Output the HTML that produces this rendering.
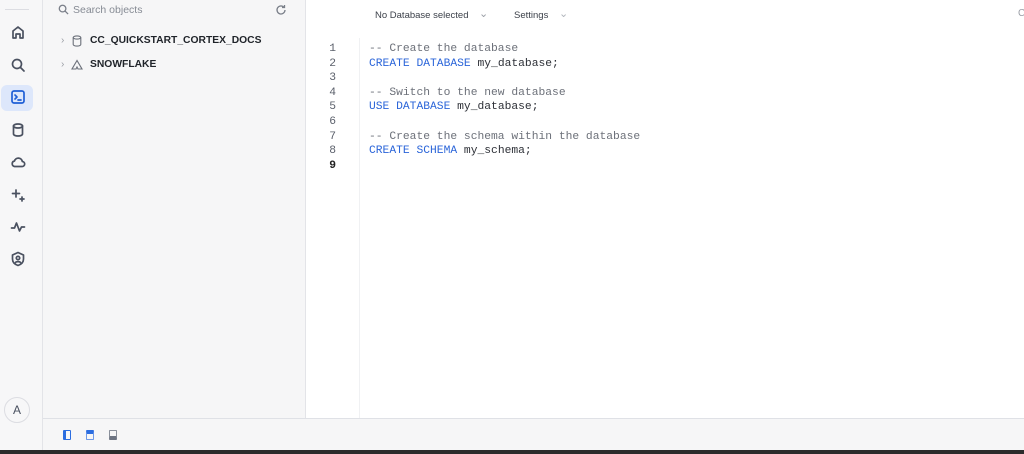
<!DOCTYPE html>
<html><head><meta charset="utf-8"><style>
*{margin:0;padding:0;box-sizing:border-box}
body{width:1024px;height:454px;overflow:hidden;background:#fff;font-family:"Liberation Sans",sans-serif;position:relative}
.rail{position:absolute;left:0;top:0;width:43px;height:450px;background:#f7f7f8;border-right:1px solid #e3e4e8}
.rail svg{position:absolute;left:10px;width:16px;height:16px;fill:none;stroke:#4a5160;stroke-width:1.7;stroke-linecap:round;stroke-linejoin:round}
.panel{position:absolute;left:43px;top:0;width:263px;height:418px;background:#f6f6f7;border-right:1px solid #e3e4e8}
.editor{position:absolute;left:306px;top:0;right:0;height:418px;background:#fff}
.bottom{position:absolute;left:43px;top:418px;right:0;height:32px;background:#f6f6f7;border-top:1px solid #dfe1e6}
.dark{position:absolute;left:0;top:450px;width:1024px;height:4px;background:#2b2b2b}
.t{position:absolute;font-size:11px;white-space:nowrap}
.code{position:absolute;left:369px;top:42px;font-family:"Liberation Mono",monospace;font-size:11.3px;line-height:14.6px;color:#2c2f36;white-space:pre}
.nums{position:absolute;left:316px;width:20px;top:42px;font-family:"Liberation Mono",monospace;font-size:11.3px;line-height:14.6px;color:#5a5f6a;text-align:right;white-space:pre}
.k{color:#2b65d9}.c{color:#6c7079}
</style></head><body>
<div class="rail">
<div style="position:absolute;left:5px;top:9px;width:24px;height:1px;background:#dcdde2"></div>
<svg style="top:24px" viewBox="0 0 16 16"><path d="M3 14V7l5-4 5 4v7h-3v-4H6v4z"/></svg>
<svg style="top:57px" viewBox="0 0 16 16"><circle cx="7" cy="7" r="4.5"/><path d="M10.5 10.5L14 14"/></svg>
<div style="position:absolute;left:1px;top:85px;width:32px;height:26px;background:#dde7fb;border-radius:6px"></div>
<svg style="top:89px;stroke:#1f5fd6" viewBox="0 0 16 16"><rect x="2" y="2" width="12" height="12" rx="2"/><path d="M5 6l2 2-2 2M8 11h3"/></svg>
<svg style="top:122px" viewBox="0 0 16 16"><ellipse cx="8" cy="4" rx="4.5" ry="2"/><path d="M3.5 4v8c0 1.1 2 2 4.5 2s4.5-.9 4.5-2V4"/></svg>
<svg style="top:154px" viewBox="0 0 16 16"><path d="M4.5 12.5h7.5a2.5 2.5 0 0 0 .3-5A4 4 0 0 0 4.5 7a2.8 2.8 0 0 0 0 5.5z"/></svg>
<svg style="top:187px" viewBox="0 0 16 16"><path d="M6 3v7M2.5 6.5h7M12 10v4M10 12h4" /></svg>
<svg style="top:219px" viewBox="0 0 16 16"><path d="M1.5 9h3l2-5 3 8 2-4h3"/></svg>
<svg style="top:251px" viewBox="0 0 16 16"><path d="M8 1.5l5.5 2.5v4c0 3.5-2.5 5.5-5.5 6.5-3-1-5.5-3-5.5-6.5V4z"/><circle cx="8" cy="7" r="1.7"/><path d="M5.5 11.5c.7-1.2 4.3-1.2 5 0"/></svg>
<div style="position:absolute;left:4px;top:397px;width:26px;height:26px;border-radius:50%;border:1px solid #dcdde2;background:#f7f7f8;font-size:12px;color:#4a5160;text-align:center;line-height:24px">A</div>
</div>
<div class="panel">
<svg style="position:absolute;left:15px;top:4px" width="11" height="11" viewBox="0 0 12 12" fill="none" stroke="#7a7f89" stroke-width="1.4"><circle cx="5" cy="5" r="3.6"/><path d="M7.7 7.7L11 11"/></svg>
<div class="t" style="left:30px;top:4px;color:#868b94;font-size:10.5px">Search objects</div>
<svg style="position:absolute;left:232px;top:4px" width="12" height="12" viewBox="0 0 12 12" fill="none" stroke="#7a7f89" stroke-width="1.3"><path d="M10 6a4 4 0 1 1-1.2-2.9M9.5 1v2.5H7"/></svg>
<div class="t" style="left:18px;top:35px;color:#9a9ea6;font-size:10px">›</div>
<svg style="position:absolute;left:29px;top:35px" width="10" height="12" viewBox="0 0 10 12" fill="none" stroke="#6b707a" stroke-width="1.1"><ellipse cx="5" cy="2.5" rx="3.8" ry="1.6"/><path d="M1.2 2.5v7c0 .9 1.7 1.6 3.8 1.6s3.8-.7 3.8-1.6v-7"/></svg>
<div class="t" style="left:47px;top:35px;color:#1f2329;font-weight:bold;font-size:10.3px">CC_QUICKSTART_CORTEX_DOCS</div>
<div class="t" style="left:18px;top:59px;color:#9a9ea6;font-size:10px">›</div>
<svg style="position:absolute;left:28px;top:59px" width="12" height="12" viewBox="0 0 12 12" fill="none" stroke="#6b707a" stroke-width="1.1"><path d="M6 1.5L1 10h4L6 8l1 2h4z"/></svg>
<div class="t" style="left:47px;top:59px;color:#1f2329;font-weight:bold;font-size:10.3px">SNOWFLAKE</div>
</div>
<div class="editor">
<div class="t" style="left:69px;top:10px;color:#3c414a;font-size:9.5px">No Database selected</div>
<div class="t" style="left:173px;top:7px;color:#9a9ea6;font-size:11px">⌄</div>
<div class="t" style="left:208px;top:10px;color:#3c414a;font-size:9.5px">Settings</div>
<div class="t" style="left:253px;top:7px;color:#b0b4bb;font-size:11px">⌄</div>
<div class="t" style="left:712px;top:8px;color:#9a9ea6;font-size:10px">C</div>
<div style="position:absolute;left:53px;top:38px;width:1px;height:380px;background:#f0f1f3"></div>
</div>
<div class="nums">1
2
3
4
5
6
7
8
<b style="color:#222">9</b></div>
<div class="code"><span class="c">-- Create the database</span>
<span class="k">CREATE DATABASE</span> my_database;

<span class="c">-- Switch to the new database</span>
<span class="k">USE DATABASE</span> my_database;

<span class="c">-- Create the schema within the database</span>
<span class="k">CREATE SCHEMA</span> my_schema;
</div>
<div class="bottom">
<div style="position:absolute;left:20px;top:11px;width:8px;height:10px;border:1.5px solid #2b6de0;border-left-width:3px;border-radius:1px"></div>
<div style="position:absolute;left:43px;top:11px;width:8px;height:10px;border:1.5px solid #5b8ee8;border-top-width:4px;border-color:#2b6de0 #6f9ae8 #6f9ae8;border-radius:1px"></div>
<div style="position:absolute;left:66px;top:11px;width:8px;height:10px;border:1.5px solid #8a909b;border-bottom-width:4px;border-bottom-color:#6d7482;border-radius:1px"></div>
</div>
<div class="dark"></div>
</body></html>
